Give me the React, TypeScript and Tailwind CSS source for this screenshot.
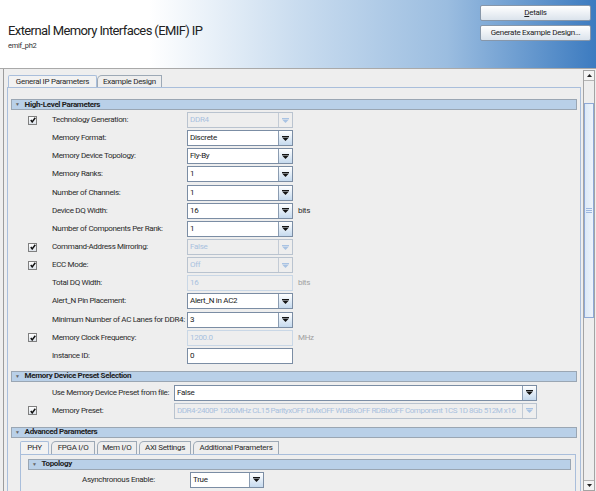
import React from "react";

type ComboProps = { value: string; disabled?: boolean; width?: string; textClass?: string };

function Arrow({ disabled }: { disabled?: boolean }) {
  return (
    <svg width="7" height="5" viewBox="0 0 7 5">
      <path d="M0 0h7v1.2H0zM0.3 1.8h6.4L3.5 5z" fill={disabled ? "#a9c3e3" : "#151515"} />
    </svg>
  );
}

function Combo({ value, disabled, width = "w-[106px]", textClass = "" }: ComboProps) {
  return (
    <div
      className={`flex h-[16px] ${width} border ${
        disabled ? "border-[#b9c3cf] bg-[#eeeeee]" : "border-[#7b8da4] bg-white"
      }`}
    >
      <div
        className={`flex flex-1 items-center overflow-hidden whitespace-nowrap px-[2px] ${textClass} ${
          disabled ? "text-[#a9c1de]" : "text-[#222]"
        }`}
      >
        {value}
      </div>
      <div
        className={`flex w-[14px] items-center justify-center border-l ${
          disabled
            ? "border-[#c3cbd5] bg-[#eeeeee]"
            : "border-[#8b9cb1] bg-gradient-to-b from-white to-[#c6daee]"
        }`}
      >
        <Arrow disabled={disabled} />
      </div>
    </div>
  );
}

function TextField({ value, disabled }: { value: string; disabled?: boolean }) {
  return (
    <div
      className={`flex h-[16px] w-[106px] items-center border px-[2px] ${
        disabled
          ? "border-[#c9d7e6] bg-[#eeeeee] text-[#a9c1de]"
          : "border-[#7b8da4] bg-white text-[#222]"
      }`}
    >
      {value}
    </div>
  );
}

function Check() {
  return (
    <div className="flex h-[9px] w-[9px] items-center justify-center border border-[#7f7f7f] bg-gradient-to-b from-white to-[#dde3ea]">
      <svg width="6" height="6" viewBox="0 0 6 6">
        <path d="M0.8 3l1.4 1.9L5.3 0.8" stroke="#111" strokeWidth="1.5" fill="none" />
      </svg>
    </div>
  );
}

function SectionHeader({ title, className = "" }: { title: string; className?: string }) {
  return (
    <div
      className={`flex h-[11px] items-center border border-[#9aa6b3] bg-[#b9d0e8] pl-[3px] font-bold tracking-[-0.35px] text-[#1e1e1e] ${className}`}
    >
      <span className="mr-[5px] text-[5px] font-normal text-[#666]">▼</span>
      {title}
    </div>
  );
}

type Row = {
  label: string;
  check?: boolean;
  kind: "combo" | "text";
  value: string;
  disabled?: boolean;
  unit?: string;
};

const highLevel: Row[] = [
  { label: "Technology Generation:", check: true, kind: "combo", value: "DDR4", disabled: true },
  { label: "Memory Format:", kind: "combo", value: "Discrete" },
  { label: "Memory Device Topology:", kind: "combo", value: "Fly-By" },
  { label: "Memory Ranks:", kind: "combo", value: "1" },
  { label: "Number of Channels:", kind: "combo", value: "1" },
  { label: "Device DQ Width:", kind: "combo", value: "16", unit: "bits" },
  { label: "Number of Components Per Rank:", kind: "combo", value: "1" },
  { label: "Command-Address Mirroring:", check: true, kind: "combo", value: "False", disabled: true },
  { label: "ECC Mode:", check: true, kind: "combo", value: "Off", disabled: true },
  { label: "Total DQ Width:", kind: "text", value: "16", disabled: true, unit: "bits" },
  { label: "Alert_N Pin Placement:", kind: "combo", value: "Alert_N in AC2" },
  { label: "Minimum Number of AC Lanes for DDR4:", kind: "combo", value: "3" },
  { label: "Memory Clock Frequency:", check: true, kind: "text", value: "1200.0", disabled: true, unit: "MHz" },
  { label: "Instance ID:", kind: "text", value: "0" },
];

function ParamRow({ row }: { row: Row }) {
  return (
    <div className="flex h-[18.15px] items-center">
      <div className="flex w-[41px] justify-end pr-[15px]">{row.check ? <Check /> : null}</div>
      <div className="w-[135px] whitespace-nowrap tracking-[-0.35px] text-[#2a2a2a]">{row.label}</div>
      {row.kind === "combo" ? (
        <Combo value={row.value} disabled={row.disabled} />
      ) : (
        <TextField value={row.value} disabled={row.disabled} />
      )}
      {row.unit ? (
        <span className={`ml-[5px] ${row.disabled ? "text-[#a0a0a0]" : "text-[#2a2a2a]"}`}>
          {row.unit}
        </span>
      ) : null}
    </div>
  );
}

function HeaderButton({ children }: { children: React.ReactNode }) {
  return (
    <div className="flex h-[16px] w-[111px] items-center justify-center rounded-[2px] border border-[#8797aa] bg-gradient-to-b from-white to-[#dbe3ec] text-[#222]">
      {children}
    </div>
  );
}

const innerTabs = [
  { name: "PHY", w: "w-[29px]" },
  { name: "FPGA I/O", w: "w-[44px]" },
  { name: "Mem I/O", w: "w-[40px]" },
  { name: "AXI Settings", w: "w-[52px]" },
  { name: "Additional Parameters", w: "w-[86px]" },
];

export default function App() {
  return (
    <div className="relative h-[491px] w-[596px] overflow-hidden bg-[#eeeeee] font-['Roboto',sans-serif] text-[8px] tracking-[-0.3px]">
      {/* header */}
      <div className="flex h-[69px] justify-between border-b border-[#a9a9a9] bg-[linear-gradient(to_right,#ffffff_0%,#ffffff_25%,#c9dcef_50%,#9bbde0_75%,#3c7bc0_100%)]">
        <div className="pl-[8px] pt-[22px]">
          <div className="text-[13px] leading-[17px] tracking-[-0.6px] text-[#222]">
            External Memory Interfaces (EMIF) IP
          </div>
          <div className="mt-[1px] text-[7.5px] text-[#333]">emif_ph2</div>
        </div>
        <div className="flex flex-col gap-[4px] pr-[5px] pt-[5px]">
          <HeaderButton>
            <span className="underline">D</span>etails
          </HeaderButton>
          <HeaderButton>Generate Example Design...</HeaderButton>
        </div>
      </div>

      {/* body */}
      <div className="flex h-[422px]">
        <div className="ml-[3px] flex-1 border-l border-[#9c9c9c] pl-[3px] pt-[6px]">
          {/* tabs */}
          <div className="flex h-[12px] items-end pl-[1px]">
            <div className="flex h-[12px] w-[89px] items-center justify-center rounded-t-[2px] border border-b-0 border-[#a9bedb] bg-[#f2f2f2] text-[#2a2a2a]">
              General IP Parameters
            </div>
            <div className="flex h-[12px] w-[65px] items-center justify-center rounded-tl-[5px] border border-b-0 border-[#9da9b6] bg-[#eeeeee] text-[#2a2a2a]">
              Example Design
            </div>
          </div>
          {/* tab panel */}
          <div className="mr-[2px] h-[420px] border border-[#a9bedb] px-[3px] pt-[11px]">
            <SectionHeader title="High-Level Parameters" />
            <div className="pt-[1px]">
              {highLevel.map((r) => (
                <ParamRow key={r.label} row={r} />
              ))}
            </div>

            <SectionHeader title="Memory Device Preset Selection" className="mt-[6px]" />
            <div className="pt-[2px]">
              <div className="flex h-[18px] items-center">
                <div className="w-[41px]" />
                <div className="w-[122px] whitespace-nowrap tracking-[-0.35px] text-[#2a2a2a]">
                  Use Memory Device Preset from file:
                </div>
                <Combo value="False" width="w-[363px]" />
              </div>
              <div className="flex h-[18px] items-center">
                <div className="flex w-[41px] justify-end pr-[15px]">
                  <Check />
                </div>
                <div className="w-[122px] tracking-[-0.35px] text-[#2a2a2a]">Memory Preset:</div>
                <Combo
                  value="DDR4-2400P 1200MHz CL15 ParityxOFF DMxOFF WDBIxOFF RDBIxOFF Component 1CS 1D 8Gb 512M x16"
                  width="w-[363px]"
                  textClass="tracking-[-0.45px]"
                  disabled
                />
              </div>
            </div>

            <SectionHeader title="Advanced Parameters" className="mt-[7px]" />
            <div className="pl-[9px] pr-[1px] pt-[3px]">
              <div className="flex h-[13px] items-end">
                {innerTabs.map((t, i) => (
                  <div
                    key={t.name}
                    className={`mr-[2px] flex h-[13px] ${t.w} items-center justify-center border border-b-0 text-[#2a2a2a] ${
                      i === 0
                        ? "rounded-t-[2px] border-[#a9bedb] bg-[#f2f2f2]"
                        : "rounded-tl-[5px] border-[#9da9b6]"
                    }`}
                  >
                    {t.name}
                  </div>
                ))}
              </div>
              <div className="h-[60px] border border-[#a9bedb] px-[7px] pr-[4px] pt-[4px]">
                <SectionHeader title="Topology" />
                <div className="flex h-[20px] items-center">
                  <div className="w-[54px]" />
                  <div className="w-[108px] whitespace-nowrap text-[#2a2a2a]">Asynchronous Enable:</div>
                  <Combo value="True" width="w-[74px]" />
                </div>
              </div>
            </div>
          </div>
        </div>

        {/* scrollbar */}
        <div className="mr-[1px] mt-[1px] flex w-[12px] flex-col border border-[#a4a4a4] bg-[#eeeeee]">
          <div className="flex h-[10px] items-center justify-center border-b border-[#b4b4b4] bg-[#f4f4f4]">
            <svg width="5" height="3" viewBox="0 0 5 3">
              <path d="M0 3h5L2.5 0z" fill="#222" />
            </svg>
          </div>
          <div className="h-[22px]" />
          <div className="flex h-[215px] items-center justify-center border-x border-y border-[#8fa9d6] bg-gradient-to-r from-[#dce9f7] to-[#eef4fb]">
            <div className="flex flex-col gap-[1px]">
              <div className="h-[1px] w-[6px] bg-[#9db7df]" />
              <div className="h-[1px] w-[6px] bg-[#9db7df]" />
              <div className="h-[1px] w-[6px] bg-[#9db7df]" />
            </div>
          </div>
          <div className="flex-1" />
          <div className="flex h-[10px] items-center justify-center border-t border-[#b4b4b4] bg-[#f4f4f4]">
            <svg width="5" height="3" viewBox="0 0 5 3">
              <path d="M0 0h5L2.5 3z" fill="#222" />
            </svg>
          </div>
        </div>
      </div>
    </div>
  );
}
